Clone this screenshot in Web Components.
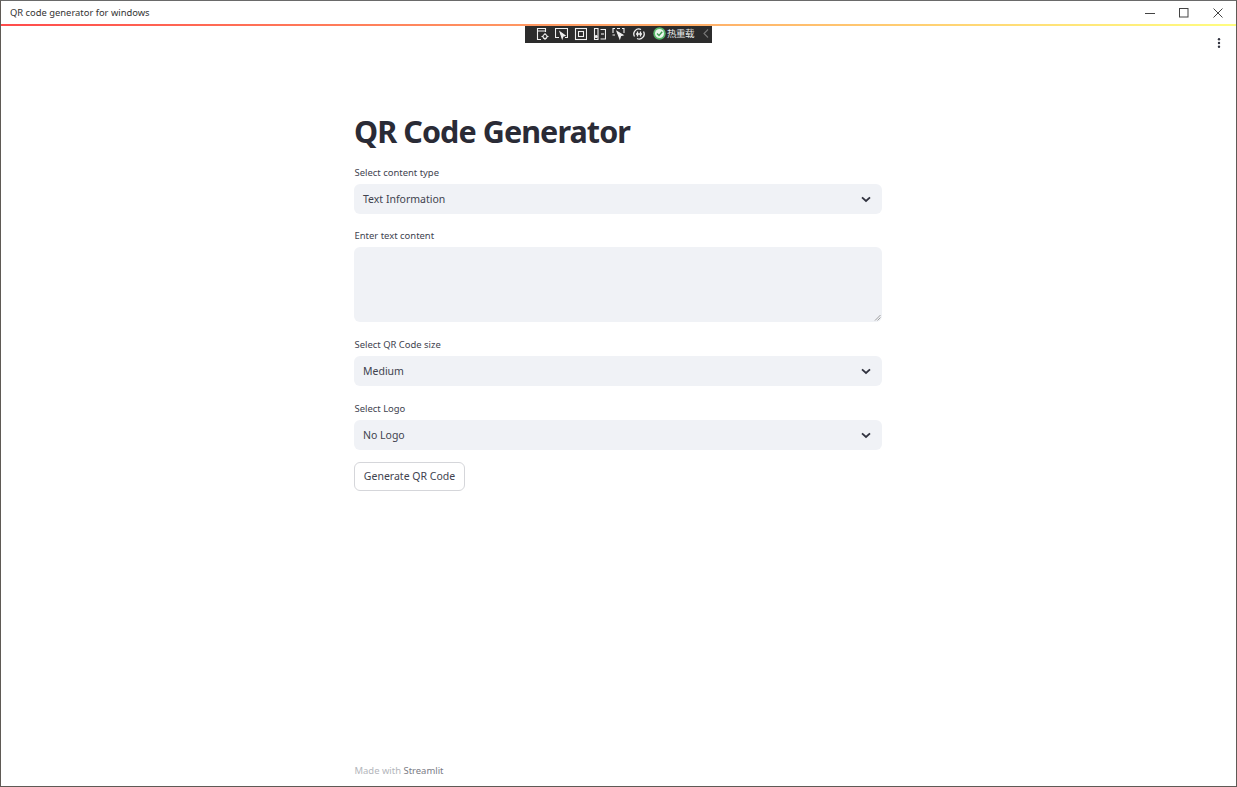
<!DOCTYPE html>
<html lang="en"><head><meta charset="utf-8"><title>QR code generator for windows</title>
<style>
html,body{margin:0;height:100%;background:#fff}
body{font-family:"Noto Sans","Liberation Sans",sans-serif;overflow:hidden}
</style></head>
<body>
<app-window>
  <title-bar slot="bar">QR code generator for windows</title-bar>
  <dev-toolbar slot="over"></dev-toolbar>
  <app-menu slot="over"></app-menu>
  <h-title>QR Code Generator</h-title>
  <st-select label="Select content type" value="Text Information"></st-select>
  <st-textarea label="Enter text content" style="margin-top:13px"></st-textarea>
  <st-select label="Select QR Code size" value="Medium" style="margin-top:14px"></st-select>
  <st-select label="Select Logo" value="No Logo" style="margin-top:14px"></st-select>
  <st-button style="margin-top:12px">Generate QR Code</st-button>
  <st-footer slot="foot"></st-footer>
</app-window>
<script>
const F='"Noto Sans","Liberation Sans",sans-serif';
function def(name,html){
  customElements.define(name,class extends HTMLElement{
    connectedCallback(){
      if(this.shadowRoot)return;
      const r=this.attachShadow({mode:'open'});
      r.innerHTML=typeof html==='function'?html(this):html;
    }
  });
}
def('app-window',`<style>
:host{display:flex;flex-direction:column;position:relative;box-sizing:border-box;height:787px;width:1237px;border:1px solid #5f5a55;border-top-color:#6a6a6a;background:#fff;overflow:hidden}
.accent{height:2px;flex:none;background:linear-gradient(90deg,#ff4b4b,#fffd80)}
.main{flex:1;display:flex;flex-direction:column;align-items:center;min-height:0}
.col{width:528px;margin-left:-1px;padding-top:79px;display:flex;flex-direction:column;flex:1}
</style><slot name="bar"></slot><div class="accent"></div><div class="main"><div class="col"><slot></slot><div style="flex:1"></div><slot name="foot"></slot></div></div><slot name="over"></slot>`);
def('title-bar',`<style>
:host{display:flex;align-items:center;height:23px;flex:none;padding-left:9px;font:400 9.4px/1 ${F};color:#333;background:#fff}
.t{flex:1}.b{display:flex;align-items:center;justify-content:center;width:34px;height:23px}
svg{display:block;fill:none;stroke:#444;stroke-width:1}
</style><div class="t"><slot></slot></div>
<div class="b"><svg width="10" height="10"><path d="M0 5.500h10"/></svg></div>
<div class="b"><svg width="10" height="10"><rect x=".5" y=".5" width="8.500" height="8.500"/></svg></div>
<div class="b" style="margin-right:1px"><svg width="10" height="10"><path d="M.5.5l9 9M9.500.5l-9 9"/></svg></div>`);
def('dev-toolbar',`<style>
:host{position:absolute;left:524px;top:25px;width:187px;height:17px;background:#2c2c2c;display:block;color:#e8e8e8;font:400 9.500px/1 "Noto Sans CJK SC",sans-serif}
.row{display:flex;align-items:center;height:15px;padding-left:11px;gap:6px}
svg{display:block;fill:none;stroke:#f0f0f0;stroke-width:1.100;flex:none}
.txt{margin-left:-5px;letter-spacing:-.5px;white-space:nowrap}
</style><div class="row">
<svg width="13" height="14"><path d="M1.500 10V1.500h8V5M1.500 4h8M1.500 10v2.500H5"/><circle cx="9" cy="9.500" r="2"/><path d="M9 6v1.500M9 11.500V13M5.500 9.500H7M11 9.500h1.500"/></svg>
<svg width="13" height="14"><path d="M4 10.500H.5v-9h12v9H10"/><path d="M5 5l5 3.500-2 .6-.8 2.400z" fill="#f0f0f0"/></svg>
<svg width="13" height="14"><rect x="1.500" y="1.500" width="11" height="11"/><rect x="4.500" y="4.500" width="5" height="5"/></svg>
<svg width="13" height="14"><path d="M1.500 1.500h3.500v11H1.500zM7.500 2.500h5v9.500h-5"/><path d="M8 7h3"/><circle cx="3.200" cy="9.500" r="1" fill="#f0f0f0"/></svg>
<svg width="13" height="14"><path d="M.5 1.500h2.500M10 1.500h2.500M5 1.500h3M1 1v5M12 1v5M.5 8H3"/><path d="M5 4.500l6 3.500-2.400.8-.8 2.700z" fill="#f0f0f0"/></svg>
<svg width="14" height="14" style="margin-left:1px;stroke-width:1.300"><path d="M2.500 9.500A5 5 0 0 1 9 2.500M11.500 4.500A5 5 0 0 1 5 11.500"/><path d="M5.500 4.500v5M8.500 4.500v5M4 7h6"/></svg>
<svg width="13" height="13" style="stroke:none;margin-left:1px"><circle cx="6.500" cy="6.500" r="6.200" fill="#59b86a"/><circle cx="6.500" cy="6.500" r="4.500" fill="#eaf6ec"/><path d="M4 6.500l2 2 3.200-3.800" fill="none" stroke="#3f9d52" stroke-width="1.400"/></svg>
<span class="txt">热重载</span>
<svg width="6" height="9" style="margin-left:3px;stroke:#777"><path d="M5 .5L1 4.500l4 4"/></svg>
</div>`);
def('app-menu',`<style>
:host{position:absolute;left:1215px;top:37px;width:6px;height:10px;display:block}
svg{display:block;fill:#31333f}
</style><svg width="6" height="10"><circle cx="3" cy="1.300" r="1.200"/><circle cx="3" cy="5" r="1.200"/><circle cx="3" cy="8.700" r="1.200"/></svg>`);
def('h-title',`<style>
:host{display:block;height:52px;margin:0 0 7px 0;font:700 30.500px/52px ${F};color:#2a2b36;letter-spacing:-.92px;white-space:nowrap}
</style><slot></slot>`);
const label=t=>`<div class="l">${t}</div>`;
const fieldCss=`.l{height:16px;margin:0 0 4px .5px;font:400 9.450px/18px ${F};color:#41434f;white-space:nowrap}`;
def('st-select',e=>`<style>
:host{display:block}${fieldCss}
.s{height:30px;border-radius:6px;background:#f0f2f6;display:flex;align-items:center;justify-content:space-between;padding:0 11px 0 9px;font:400 10.500px/1 ${F};color:#41434f}
svg{display:block;fill:none;stroke:#31333f;stroke-width:1.800}
</style>${label(e.getAttribute('label'))}<div class="s"><span>${e.getAttribute('value')}</span><svg width="10" height="7"><path d="M1 1.300l4 3.700 4-3.700"/></svg></div>`);
def('st-textarea',e=>`<style>
:host{display:block}${fieldCss}
.a{height:75px;border-radius:6px;background:#f0f2f6;position:relative}
svg{position:absolute;right:1px;bottom:1px;fill:none;stroke:#8a8a8a;stroke-width:.8}
</style>${label(e.getAttribute('label'))}<div class="a"><svg width="7" height="7"><path d="M1 6.500L6.500 1M3.500 6.500l3-3"/></svg></div>`);
def('st-button',`<style>
:host{display:inline-flex;align-self:flex-start;box-sizing:border-box;height:29px;width:111px;align-items:center;justify-content:center;border:1px solid #d5d6da;border-radius:6px;background:#fff;font:400 10.500px/1 ${F};color:#41434f;white-space:nowrap}
</style><slot></slot>`);
def('st-footer',`<style>
:host{display:block;height:23px;margin-left:.5px;font:400 9.450px/16px ${F};color:#b4b6bc;white-space:nowrap}
b{font-weight:400;color:#7a7c85}
</style>Made with <b>Streamlit</b>`);
</script>
</body></html>
